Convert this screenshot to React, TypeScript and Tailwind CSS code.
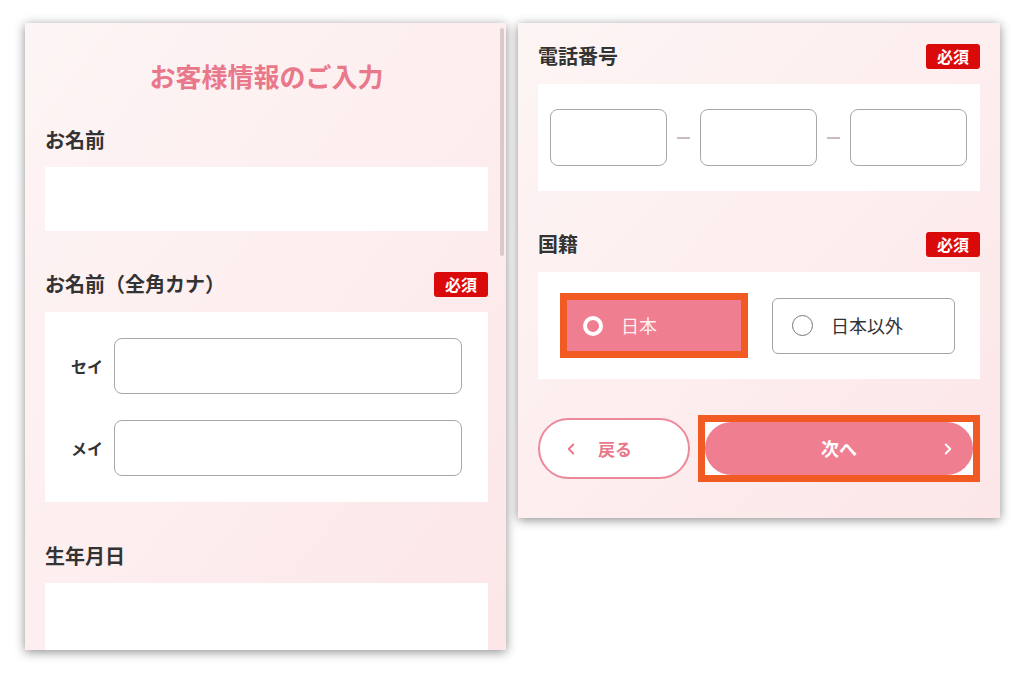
import { ChevronLeft, ChevronRight } from "lucide-react";

const font = { fontFamily: '"Noto Sans CJK JP", "Noto Sans", sans-serif' };

function Required() {
  return (
    <span className="flex h-[25px] w-[54px] items-center justify-center rounded-[3px] bg-[#db0a0a] text-[16px] font-bold leading-none text-white">
      必須
    </span>
  );
}

function Label({ text, required }: { text: string; required?: boolean }) {
  return (
    <div className="flex h-[28px] items-center justify-between">
      <span className="text-[20px] font-bold leading-none text-[#333]">{text}</span>
      {required && <Required />}
    </div>
  );
}

function KanaRow({ label }: { label: string }) {
  return (
    <div className="flex items-center">
      <span className="w-[43px] text-[16px] font-bold text-[#333]">{label}</span>
      <div className="h-[56px] flex-1 rounded-[8px] border-[1.5px] border-[#a8a8a8] bg-white" />
    </div>
  );
}

function App() {
  return (
    <div
      className="flex h-[674px] w-[1024px] items-start gap-[12px] overflow-hidden bg-white pl-[25px] pt-[23px]"
      style={font}
    >
      {/* left card */}
      <div className="relative h-[627px] w-[481px] shrink-0 overflow-hidden bg-gradient-to-br from-[#fdf5f5] via-[#fdeeef] to-[#fce6e8] pl-[20px] pr-[18px] pt-[35px] shadow-[0_2px_10px_rgba(0,0,0,0.45)]">
        <h1 className="text-center text-[26px] font-bold leading-[36px] text-[#e8788a]">
          お客様情報のご入力
        </h1>

        <div className="mt-[32px]">
          <Label text="お名前" />
          <div className="mt-[13px] h-[64px] bg-white" />
        </div>

        <div className="mt-[39px]">
          <Label text="お名前（全角カナ）" required />
          <div className="mt-[14px] flex flex-col gap-[26px] bg-white px-[26px] py-[26px]">
            <KanaRow label="セイ" />
            <KanaRow label="メイ" />
          </div>
        </div>

        <div className="mt-[40px]">
          <Label text="生年月日" />
          <div className="mt-[13px] h-[80px] bg-white" />
        </div>

        {/* scrollbar */}
        <div className="absolute right-[2px] top-[5px] h-[228px] w-[4px] rounded-full bg-[#d9c9ca]" />
      </div>

      {/* right card */}
      <div className="h-[495px] w-[482px] shrink-0 bg-gradient-to-br from-[#fdf5f5] via-[#fdeeef] to-[#fce6e8] px-[20px] pt-[19px] shadow-[0_2px_10px_rgba(0,0,0,0.45)]">
        <Label text="電話番号" required />
        <div className="mt-[14px] flex items-center bg-white pb-[25px] pl-[12px] pr-[13px] pt-[25px]">
          <div className="h-[57px] w-[117px] rounded-[8px] border-[1.5px] border-[#a8a8a8]" />
          <div className="flex w-[33px] justify-center">
            <div className="h-[2px] w-[13px] bg-[#cbbcbc]" />
          </div>
          <div className="h-[57px] w-[117px] rounded-[8px] border-[1.5px] border-[#a8a8a8]" />
          <div className="flex w-[33px] justify-center">
            <div className="h-[2px] w-[13px] bg-[#cbbcbc]" />
          </div>
          <div className="h-[57px] w-[117px] rounded-[8px] border-[1.5px] border-[#a8a8a8]" />
        </div>

        <div className="mt-[39px]">
          <Label text="国籍" required />
          <div className="mt-[14px] flex h-[107px] items-center bg-white pl-[22px]">
            <div className="flex h-[65px] w-[188px] items-center border-[7px] border-[#f15a22] bg-[#ef7f90] pl-[16px]">
              <span className="h-[20px] w-[20px] rounded-full border-[4px] border-white" />
              <span className="ml-[18px] text-[18px] text-[#fdf0f2]">日本</span>
            </div>
            <div className="ml-[24px] flex h-[56px] w-[183px] items-center rounded-[6px] border-[1.5px] border-[#a3a3a3] pl-[19px]">
              <span className="h-[21px] w-[21px] rounded-full border-[1.5px] border-[#777]" />
              <span className="ml-[18px] text-[18px] text-[#333]">日本以外</span>
            </div>
          </div>
        </div>

        <div className="mt-[36px] flex items-center gap-[8px]">
          <button className="relative flex h-[61px] w-[152px] items-center justify-center rounded-full border-2 border-[#ec8a9a] bg-white text-[17px] font-bold text-[#e8788a]">
            <ChevronLeft className="absolute left-[22px]" size={18} strokeWidth={2.5} />
            <span className="ml-[2px]">戻る</span>
          </button>
          <div className="h-[67px] w-[282px] border-[7px] border-[#f15a22] bg-white">
            <div className="relative flex h-full w-full items-center justify-center rounded-full bg-[#ef7f90] text-[18px] font-bold text-white">
              次へ
              <ChevronRight className="absolute right-[16px]" size={18} strokeWidth={2.5} />
            </div>
          </div>
        </div>
      </div>
    </div>
  );
}

export default App;
